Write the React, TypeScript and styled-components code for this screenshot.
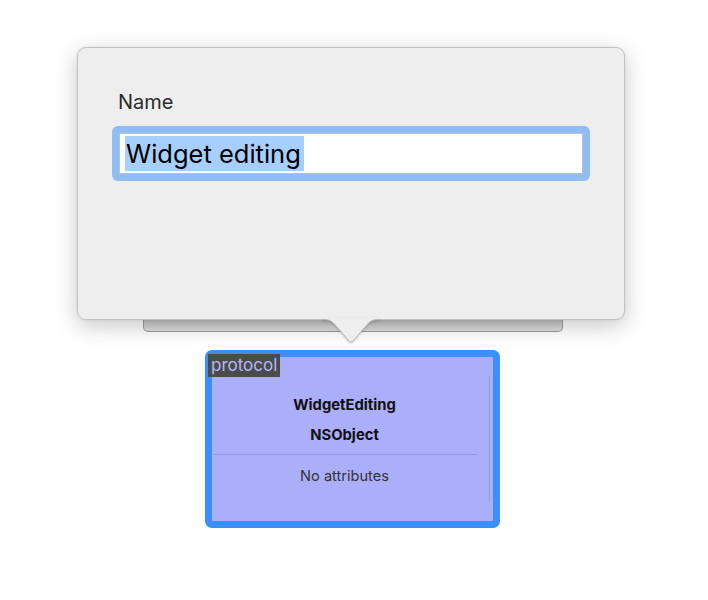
import React from "react";
import styled, { createGlobalStyle } from "styled-components";

const Global = createGlobalStyle`
  html, body { margin: 0; padding: 0; background: #ffffff; }
  body { font-family: Inter, "Liberation Sans", Arial, sans-serif; }
`;

const Page = styled.div`
  display: flex;
  flex-direction: column;
  align-items: flex-start;
  padding: 47px 0 0 77px;
  width: 708px;
  height: 600px;
  box-sizing: border-box;
`;

const PopoverWrap = styled.div`
  position: relative;
  width: 548px;
  display: flex;
  flex-direction: column;
`;

const Popover = styled.div`
  position: relative;
  z-index: 2;
  box-sizing: border-box;
  height: 273px;
  background: #eeeeee;
  border: 1px solid #c2c2c2;
  border-radius: 9px;
  box-shadow: 0 6px 22px rgba(0, 0, 0, 0.22), 0 0 2px rgba(0, 0, 0, 0.08);
  padding: 42px 34px 0 34px;
  display: flex;
  flex-direction: column;
`;

const Label = styled.div`
  font-size: 20px;
  line-height: 24px;
  color: #2b2b2b;
  margin-left: 6px;
  margin-bottom: 12px;
`;

const FieldRing = styled.div`
  padding: 7px;
  background: #8fbdf5;
  border-radius: 6px;
`;

const Field = styled.div`
  box-sizing: border-box;
  height: 41px;
  background: #ffffff;
  border: 1px solid #c0c0c0;
  display: flex;
  align-items: center;
  padding-left: 5px;
`;

const Selected = styled.span`
  display: inline-block;
  background: #a6cffd;
  color: #000000;
  font-size: 25.5px;
  line-height: 34px;
  padding: 1px 3px 0 1px;
`;

const Ledge = styled.div`
  margin-left: 66px;
  width: 420px;
  height: 12px;
  box-sizing: border-box;
  background: linear-gradient(#c2c2c2, #e0e0e0);
  border: 1px solid #9c9c9c;
  border-top: none;
  border-radius: 0 0 5px 5px;
`;

const ArrowSvg = styled.svg`
  position: absolute;
  z-index: 3;
  left: 245px;
  top: 271px;
  filter: drop-shadow(0 1px 1px rgba(0, 0, 0, 0.18));
`;

const ProtocolBox = styled.div`
  position: relative;
  margin: 18px 0 0 128px;
  width: 295px;
  height: 178px;
  box-sizing: border-box;
  border: 7px solid #3b8ff9;
  border-radius: 7px;
  background: #abaff9;
  display: flex;
  padding-right: 2px;
`;

const Tag = styled.div`
  position: absolute;
  left: -4px;
  top: -3px;
  background: #4b4b4b;
  color: #b7b8f6;
  font-size: 17px;
  line-height: 23px;
  padding: 0 3px;
`;

const Main = styled.div`
  width: 265px;
  display: flex;
  flex-direction: column;
  align-items: center;
  padding-top: 39px;
`;

const Title = styled.div<{ $gap?: number }>`
  font-size: 14.8px;
  font-weight: 700;
  line-height: 18px;
  color: #111111;
  margin-bottom: ${(p) => p.$gap ?? 0}px;
`;

const Divider = styled.div`
  align-self: stretch;
  height: 1px;
  background: #9497da;
  margin: 10px 0 12px 1px;
`;

const Note = styled.div`
  font-size: 14.6px;
  line-height: 18px;
  color: #333333;
`;

const ScrollRule = styled.div`
  width: 1px;
  margin-left: 12px;
  margin-top: 19px;
  height: 126px;
  background: #999ce0;
`;

export default function App() {
  return (
    <>
      <Global />
      <Page>
        <PopoverWrap>
          <Popover>
            <Label>Name</Label>
            <FieldRing>
              <Field>
                <Selected>Widget editing</Selected>
              </Field>
            </FieldRing>
          </Popover>
          <Ledge />
          <ArrowSvg width="58" height="28" viewBox="0 0 58 28">
            <path
              d="M0,0 L0,1.5 C8,1.5 10,3 14,8 L27,23 Q29,25.5 31,23 L44,8 C48,3 50,1.5 58,1.5 L58,0 Z"
              fill="#eeeeee"
            />
            <path
              d="M0,1.5 C8,1.5 10,3 14,8 L27,23 Q29,25.5 31,23 L44,8 C48,3 50,1.5 58,1.5"
              fill="none"
              stroke="#b4b4b4"
              strokeWidth="1"
            />
          </ArrowSvg>
        </PopoverWrap>
        <ProtocolBox>
          <Tag>protocol</Tag>
          <Main>
            <Title $gap={12}>WidgetEditing</Title>
            <Title>NSObject</Title>
            <Divider />
            <Note>No attributes</Note>
          </Main>
          <ScrollRule />
        </ProtocolBox>
      </Page>
    </>
  );
}
